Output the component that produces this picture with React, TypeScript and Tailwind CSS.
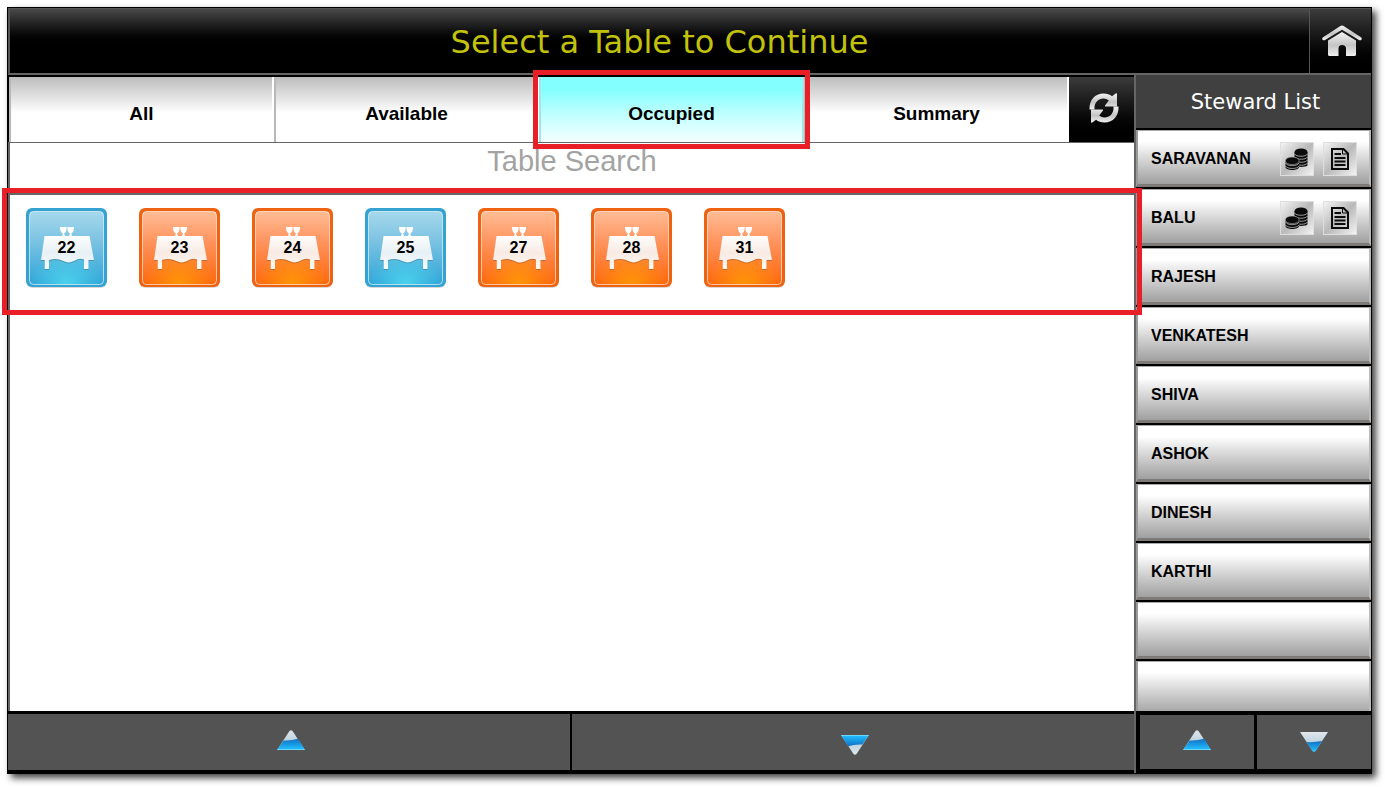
const tabs = ["All", "Available", "Occupied", "Summary"]

const tables = [
    { no: 22, color: "blue" },
    { no: 23, color: "orange" },
    { no: 24, color: "orange" },
    { no: 25, color: "blue" },
    { no: 27, color: "orange" },
    { no: 28, color: "orange" },
    { no: 31, color: "orange" },
]

const stewards = [
    { name: "SARAVANAN", active: true },
    { name: "BALU", active: true },
    { name: "RAJESH", active: false },
    { name: "VENKATESH", active: false },
    { name: "SHIVA", active: false },
    { name: "ASHOK", active: false },
    { name: "DINESH", active: false },
    { name: "KARTHI", active: false },
    { name: "", active: false },
    { name: "", active: false },
]

// Gradients shared by all the icons
const IconDefs = () => (
    <svg className="absolute w-0 h-0" aria-hidden="true">
        <defs>
            <linearGradient id="silver" x1="0" y1="0" x2="0" y2="1">
                <stop offset="0" stopColor="#f4f4f4" />
                <stop offset="0.55" stopColor="#c4c4c4" />
                <stop offset="1" stopColor="#f0f0f0" />
            </linearGradient>
            <linearGradient id="blue" x1="0" y1="0" x2="0" y2="1">
                <stop offset="0" stopColor="#a6d8ec" />
                <stop offset="0.4" stopColor="#7cc3e2" />
                <stop offset="1" stopColor="#2ea4d8" />
            </linearGradient>
            <linearGradient id="orange" x1="0" y1="0" x2="0" y2="1">
                <stop offset="0" stopColor="#ffbc95" />
                <stop offset="0.4" stopColor="#ff9560" />
                <stop offset="1" stopColor="#fe650c" />
            </linearGradient>
            <radialGradient id="blue-glow" cx="0.5" cy="1" r="0.5">
                <stop offset="0" stopColor="#4bd2ec" />
                <stop offset="1" stopColor="#4bd2ec" stopOpacity="0" />
            </radialGradient>
            <radialGradient id="orange-glow" cx="0.5" cy="1" r="0.5">
                <stop offset="0" stopColor="#ff9608" />
                <stop offset="1" stopColor="#ff9608" stopOpacity="0" />
            </radialGradient>
            <linearGradient id="cloth" x1="0" y1="0" x2="0" y2="1">
                <stop offset="0" stopColor="#fff" stopOpacity="0.98" />
                <stop offset="0.5" stopColor="#fff" stopOpacity="0.86" />
                <stop offset="1" stopColor="#fff" stopOpacity="0.96" />
            </linearGradient>
            <linearGradient id="water" x1="0" y1="0" x2="0" y2="1">
                <stop offset="0" stopColor="#0f6fc4" />
                <stop offset="1" stopColor="#22c3ff" />
            </linearGradient>
            <linearGradient id="glass" x1="0" y1="0" x2="0" y2="1">
                <stop offset="0" stopColor="#dfe7ec" />
                <stop offset="1" stopColor="#a3bfd4" />
            </linearGradient>
        </defs>
    </svg>
)

const HomeIcon = () => (
    <svg width="40" height="32" viewBox="0 0 40 32" fill="url(#silver)">
        <path d="M20 0.5 Q21 0.5 22 1.3 L39 12.2 Q40.4 13.6 39.4 14.8 Q38.4 15.8 37 15 L20 4.8 L3 15 Q1.6 15.8 0.6 14.8 Q-0.4 13.6 1 12.2 L18 1.3 Q19 0.5 20 0.5Z" />
        <path d="M20 7 L34 15.500 V29.500 Q34 31 32.500 31 H24 V23.500 Q24 20 20 20 Q16.500 20 16.500 23.500 V31 H7.500 Q6 31 6 29.500 V15.500Z" />
    </svg>
)

const RefreshIcon = () => (
    <svg width="30" height="30" viewBox="0 0 30 30" fill="url(#silver)">
        <path d="M0.500 16.500 C0 7 6 0.500 14.500 0.500 C18 0.500 20.800 1.500 23 3.300 L27 0.300 Q28 0 28 1.200 V13.500 H16.500 Q15.500 13.300 16 12.500 L19.800 7.500 C18.200 6.200 16.500 5.500 14.500 5.500 C9.500 5.500 5.500 9.500 5.500 14.500 V16.500Z" />
        <path d="M29.500 13.500 C30 23 24 29.500 15.500 29.500 C12 29.500 9.200 28.500 7 26.700 L3 29.700 Q2 30 2 28.800 V16.500 H13.500 Q14.500 16.700 14 17.500 L10.200 22.500 C11.800 23.800 13.500 24.500 15.500 24.500 C20.500 24.500 24.500 20.500 24.500 15.500 V13.500Z" />
    </svg>
)

const CoinsIcon = () => (
    <svg width="24" height="24" viewBox="0 0 24 24">
        <path d="M9.500 5 V18 C9.500 20.500 22.500 20.500 22.500 18 V5Z" fill="#0b0b0b" />
        <ellipse cx="16" cy="5" rx="6.500" ry="3.500" fill="#0b0b0b" />
        <g fill="none" stroke="#d0d0d0" strokeWidth="0.7">
            <path d="M9.500 7 C11 10 21 10 22.500 7" />
            <path d="M10 10 C11.500 13 21 13 22.500 10" />
            <path d="M10 13 C11.500 16 21 16 22.500 13" />
            <path d="M10 16 C11.500 19 21 19 22.500 16" />
        </g>
        <path d="M0.500 14 V20 C0.500 24 14 24 14 20 V14Z" fill="#0b0b0b" />
        <ellipse cx="7.200" cy="13.800" rx="6.900" ry="3.800" fill="#0b0b0b" stroke="#d0d0d0" strokeWidth="0.5" />
        <g fill="none" stroke="#d0d0d0" strokeWidth="0.7">
            <path d="M0.500 16 C2 19.500 12.500 19.500 14 16" />
            <path d="M0.500 19 C2 22.300 12.500 22.300 14 19" />
        </g>
    </svg>
)

const BillIcon = () => (
    <svg width="18" height="22" viewBox="0 0 18 22" fill="none" stroke="#0b0b0b" strokeWidth="2">
        <path d="M1 1 H12.500 L17 5.500 V21 H1Z" />
        <path d="M11.500 1.500 V6 H16.500" strokeWidth="1" />
        <path d="M3.500 6 H10 M3.500 10 H14.500 M3.500 13.500 H14.500 M3.500 17 H14.500" strokeWidth="1.800" />
    </svg>
)

const UpArrow = ({ className = "" }) => (
    <svg className={className} width="28" height="25" viewBox="0 0 28 25">
        <path d="M12.500 1 Q14 -0.500 15.500 1 L28 20 H0Z" fill="url(#glass)" />
        <path d="M6.600 10.500 Q14 11 21 8.800 L28 20 H0Z" fill="url(#water)" />
        <path d="M0.500 19.500 H27.500" stroke="#6fd6fb" />
    </svg>
)

const DownArrow = () => (
    <svg width="28" height="20" viewBox="0 0 28 20">
        <path d="M0 0 H28 L15.500 19 Q14 20.500 12.500 19Z" fill="url(#glass)" />
        <path d="M6.500 10 Q14 10.500 22 9 L15.500 19 Q14 20.500 12.500 19Z" fill="url(#water)" />
    </svg>
)

const TableTile = ({ no, color }: { no: number; color: string }) => {
    const isBlue = color === "blue"
    return (
        <button className="relative w-[81px] h-20 shrink-0 flex items-center justify-center">
            <svg className="absolute inset-0" width="81" height="80" viewBox="0 0 81 80">
                <rect x="0.500" y="2" width="80" height="78" rx="6" fill="#000" opacity="0.15" />
                <rect x="0" y="0" width="81" height="79" rx="6" fill={isBlue ? "#35a3d2" : "#ee6312"} />
                <rect x="3.500" y="3.500" width="74" height="73" rx="4" fill={isBlue ? "url(#blue)" : "url(#orange)"} />
                <rect x="3.500" y="3.500" width="74" height="73" rx="4" fill={isBlue ? "url(#blue-glow)" : "url(#orange-glow)"} stroke="#fff" strokeOpacity="0.6" />
                <path
                    d="M18.500 29 H63.500 L68 53 H62.500 V62 H58 V52.500 C51 50 49 55.500 42.500 55.500 C37 55.500 34 50 23 53 V62 H18.700 V53 H15Z"
                    fill="#000"
                    opacity="0.2"
                />
                <path
                    d="M18.500 28 H63.500 L68 52 H62.500 V61 H58 V51.500 C51 49 49 54.500 42.500 54.500 C37 54.500 34 49 23 52 V61 H18.700 V52 H15Z"
                    fill="url(#cloth)"
                />
                <path
                    d="M34 19 H40.700 C40.700 22.500 40 24.500 38 25.500 L39 28 H36 L36.800 25.500 C34.800 24.500 34 22.500 34 19Z M41.400 19 H48 C48 22.500 47.200 24.500 45.300 25.500 L46 28 H43 L44 25.500 C42 24.500 41.400 22.500 41.400 19Z"
                    fill="#fff"
                />
            </svg>
            <span className="relative font-bold text-base text-black">{no}</span>
        </button>
    )
}

const iconButton = "w-[34px] h-[34px] flex items-center justify-center border border-[#dedede] bg-linear-to-br from-[#f4f4f4] via-[#b9b9b9] to-[#f4f4f4]"

const App = () => {
    return (
        <div className="w-full h-screen bg-white pt-[7px] pl-[7px] pr-[13px] pb-[13px] font-['Liberation_Sans',sans-serif] overflow-hidden">
            <IconDefs />
            <div className="h-full flex flex-col bg-black border border-black shadow-[4px_4px_7px_0px_rgba(0,0,0,0.75)]">
                {/* Title bar */}
                <header className="h-[67px] shrink-0 flex border-t border-l-2 border-[#555] border-b-2 border-b-[#666]">
                    <h1 className="flex-1 flex items-center justify-center pt-0.5 bg-linear-to-b from-[#4a4a4a] to-black to-60% text-[#c2c20c] text-[32px] font-['DejaVu_Sans',sans-serif]">
                        Select a Table to Continue
                    </h1>
                    <button aria-label="Home" className="w-[62px] border-l border-[#555] pl-0.5 flex items-center justify-center bg-linear-to-b from-[#3c3c3c] to-black">
                        <HomeIcon />
                    </button>
                </header>

                <div className="flex-1 min-h-0 flex">
                    {/* Tables */}
                    <main className="flex-1 min-w-0 flex flex-col">
                        <div className="h-[68px] shrink-0 flex pt-0.5 pl-px border-b border-[#666]">
                            <nav className="flex-1 grid grid-cols-4">
                                {tabs.map((tab) => (
                                    <button
                                        key={tab}
                                        className={
                                            tab === "Occupied"
                                                ? "relative pt-2.5 font-bold text-[19px] text-black bg-linear-to-b from-[#84ffff] from-20% to-[#f4ffff] border-l-2 border-r-2 border-[#a5e5e8]"
                                                : "pt-2.5 font-bold text-[19px] text-black bg-linear-to-b from-[#bdbdbd] to-white to-55% border-l-2 border-l-[#b8b8b8] border-r-2 border-r-white"
                                        }
                                    >
                                        {tab}
                                        {tab === "Occupied" && (
                                            <span className="absolute z-10 -inset-x-2 -top-[7px] -bottom-[7px] border-[5px] border-[#e91f27] pointer-events-none" />
                                        )}
                                    </button>
                                ))}
                            </nav>
                            <button aria-label="Refresh" className="w-[65px] pl-1 pb-1 flex items-center justify-center bg-linear-to-b from-[#3c3c3c] to-black">
                                <RefreshIcon />
                            </button>
                        </div>

                        <div className="flex-1 min-h-0 bg-white border-l-2 border-[#666]">
                            <div className="h-[50px]">
                                <input
                                    type="text"
                                    aria-label="Table Search"
                                    placeholder="Table Search"
                                    className="w-full h-[38px] text-center text-[29px] text-black placeholder:text-[#a3a3a3] outline-none"
                                />
                            </div>
                            <div className="relative border-t-2 border-[#666] h-[120px] pt-[13px] pl-4 flex gap-8">
                                {tables.map((table) => (
                                    <TableTile key={table.no} no={table.no} color={table.color} />
                                ))}
                                <div className="absolute z-10 -left-2 -right-2 -top-[7px] -bottom-0.5 border-[5px] border-[#e91f27] pointer-events-none" />
                            </div>
                        </div>

                        <div className="h-[62px] shrink-0 grid grid-cols-2 gap-0.5 border-y-3 border-black">
                            <button aria-label="Scroll tables up" className="pl-1 flex items-center justify-center bg-[#535353]">
                                <UpArrow />
                            </button>
                            <button aria-label="Scroll tables down" className="pl-1 flex items-center justify-center bg-[#535353]">
                                <UpArrow className="rotate-180" />
                            </button>
                        </div>
                    </main>

                    {/* Stewards */}
                    <aside className="w-[237px] shrink-0 flex flex-col border-l-2 border-[#666]">
                        <h2 className="h-[53px] shrink-0 flex items-center justify-center pl-1 pt-0.5 bg-[#404040] text-white text-[21px] font-['DejaVu_Sans',sans-serif]">
                            Steward List
                        </h2>
                        <ul className="flex-1 min-h-0 overflow-hidden pt-0.5">
                            {stewards.map((steward, i) => (
                                <li
                                    key={i}
                                    className="h-[57px] mb-0.5 flex items-center gap-[9px] pt-0.5 pl-[13px] pr-3 border-2 border-t-[#aaa] border-t border-l-[#999] border-r-[#bbb] border-b-3 border-b-[#7d7a78] bg-linear-to-b from-white from-20% to-[#a0a0a0]"
                                >
                                    <span className="flex-1 font-bold text-base text-black">{steward.name}</span>
                                    {steward.active && (
                                        <>
                                            <button aria-label="Settle" className={iconButton}>
                                                <CoinsIcon />
                                            </button>
                                            <button aria-label="Bill" className={iconButton}>
                                                <BillIcon />
                                            </button>
                                        </>
                                    )}
                                </li>
                            ))}
                        </ul>
                        <div className="h-[62px] shrink-0 grid grid-cols-2 gap-[3px] border-y-4 border-l-4 border-black">
                            <button aria-label="Scroll stewards up" className="flex items-center justify-center bg-[#535353]">
                                <UpArrow />
                            </button>
                            <button aria-label="Scroll stewards down" className="flex items-center justify-center bg-[#535353]">
                                <DownArrow />
                            </button>
                        </div>
                    </aside>
                </div>
            </div>
        </div>
    )
}

export default App
